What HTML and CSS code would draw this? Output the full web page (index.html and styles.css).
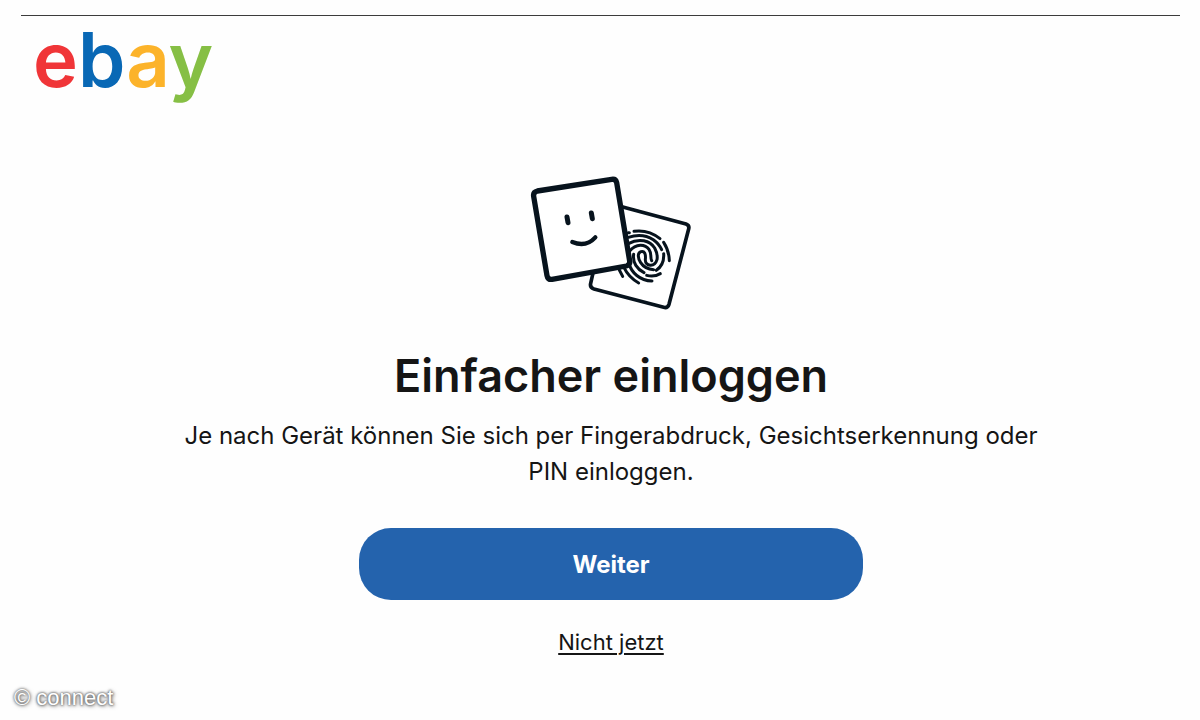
FILE: index.html
```html
<!DOCTYPE html>
<html lang="de">

<head>
  <meta charset="UTF-8" />
  <meta name="viewport" content="width=device-width, initial-scale=1" />
  <title>Einfacher einloggen</title>
  <link rel="stylesheet" href="styles.css">
</head>

<body>

  <header>
    <a class="logo" href="#" aria-label="ebay"><span class="red">e</span><span class="blue">b</span><span class="yellow">a</span><span class="green">y</span></a>
  </header>

  <main class="container">
    <svg class="illustration" viewBox="3 0 540 465" fill="none" stroke="#07131d" stroke-linecap="round" stroke-linejoin="round" aria-hidden="true">
      <!-- Karte mit Fingerabdruck -->
      <path stroke-width="11" fill="#fff" d="M300 124 L498 177 Q509 181 506 192 L447 418 Q443 430 431 427 L222 372 Q209 368 212 355 L262 134 Z" />
      <g stroke-width="9" transform="translate(195 150)">
        <path d="M147 49 Q190 43 225 71" />
        <path d="M236 82 Q252 106 253 137" />
        <path d="M130 67 Q172 53 205 74 Q222 86 230 104" />
        <path d="M130 86 C163 68 195 77 209 99 Q219 118 216 134 C209 158 180 154 181 134 C183 116 178 107 168 110 C156 114 159 131 167 143 Q180 163 206 164" />
        <path d="M134 108 C153 84 181 87 192 103 C201 116 195 129 200 137" />
        <path d="M236 116 C238 143 227 157 214 166" />
        <path d="M146 118 C142 143 157 163 177 173" />
        <path d="M185 181 Q207 187 226 176" />
        <path d="M130 141 C139 174 165 197 201 198" />
        <path d="M117 158 Q131 187 161 204" />
        <path d="M103 165 L113 184" />
        <path d="M130 53 L133 53" />
      </g>
      <!-- Karte mit Gesicht -->
      <path stroke-width="16" fill="#fff" d="M52 78 L275 43 Q287 41 290 53 L329 288 Q331 300 319 303 L96 343 Q83 345 81 332 L41 94 Q39 81 52 78 Z" />
      <path stroke-width="15" d="M141 156 L144 173 M214 144 L217 161" />
      <path stroke-width="13" d="M157 231 Q198 248 226 217" />
    </svg>

    <h1>Einfacher einloggen</h1>
    <p>Je nach Gerät können Sie sich per Fingerabdruck, Gesichtserkennung oder PIN einloggen.</p>
    <button type="button" class="weiter-btn">Weiter</button>
    <a class="skip-link" href="#">Nicht jetzt</a>
  </main>

  <footer>© connect</footer>

</body>

</html>
```
FILE: styles.css
```css
body {
  font-family: Inter, "Liberation Sans", sans-serif;
  background: #fefefe;
  color: #151515;
  margin: 0;
}

header {
  margin: 15px 20px 0 21px;
  padding: 0 12px 6px;
  border-top: 1px solid #3c3c3c;
}

.logo {
  display: inline-block;
  font-size: 76px;
  line-height: 86px;
  font-weight: 600;
  text-decoration: none;
}

.red {
  color: #f03538;
}

.blue {
  color: #0968b5;
}

.yellow {
  color: #fcb32a;
}

.green {
  color: #86bf45;
}

.container {
  display: flex;
  flex-direction: column;
  align-items: center;
  max-width: 900px;
  margin: 0 auto;
  padding: 57px 0 0 22px;
  text-align: center;
}

.illustration {
  width: 180px;
  height: 155px;
}

h1 {
  font-size: 45px;
  line-height: 56px;
  font-weight: 600;
  margin: 28px 0 14px;
}

p {
  max-width: 880px;
  font-size: 24px;
  line-height: 36px;
  margin: 0 0 38px;
}

.weiter-btn {
  width: 56%;
  height: 72px;
  background: #2463ad;
  color: white;
  border: none;
  border-radius: 32px;
  font-family: inherit;
  font-size: 24px;
  font-weight: 700;
  cursor: pointer;
}

.weiter-btn:hover {
  background: #1b4f8d;
}

.skip-link {
  margin-top: 28px;
  color: #151515;
  font-size: 22px;
  line-height: 28px;
  text-underline-offset: 3px;
}

footer {
  padding: 28px 14px 0;
  color: white;
  font-family: "Liberation Sans", sans-serif;
  font-size: 22px;
  line-height: 28px;
  text-shadow: 0 0 2px #666, 0 0 3px #666, 1px 1px 4px #777;
}
```
